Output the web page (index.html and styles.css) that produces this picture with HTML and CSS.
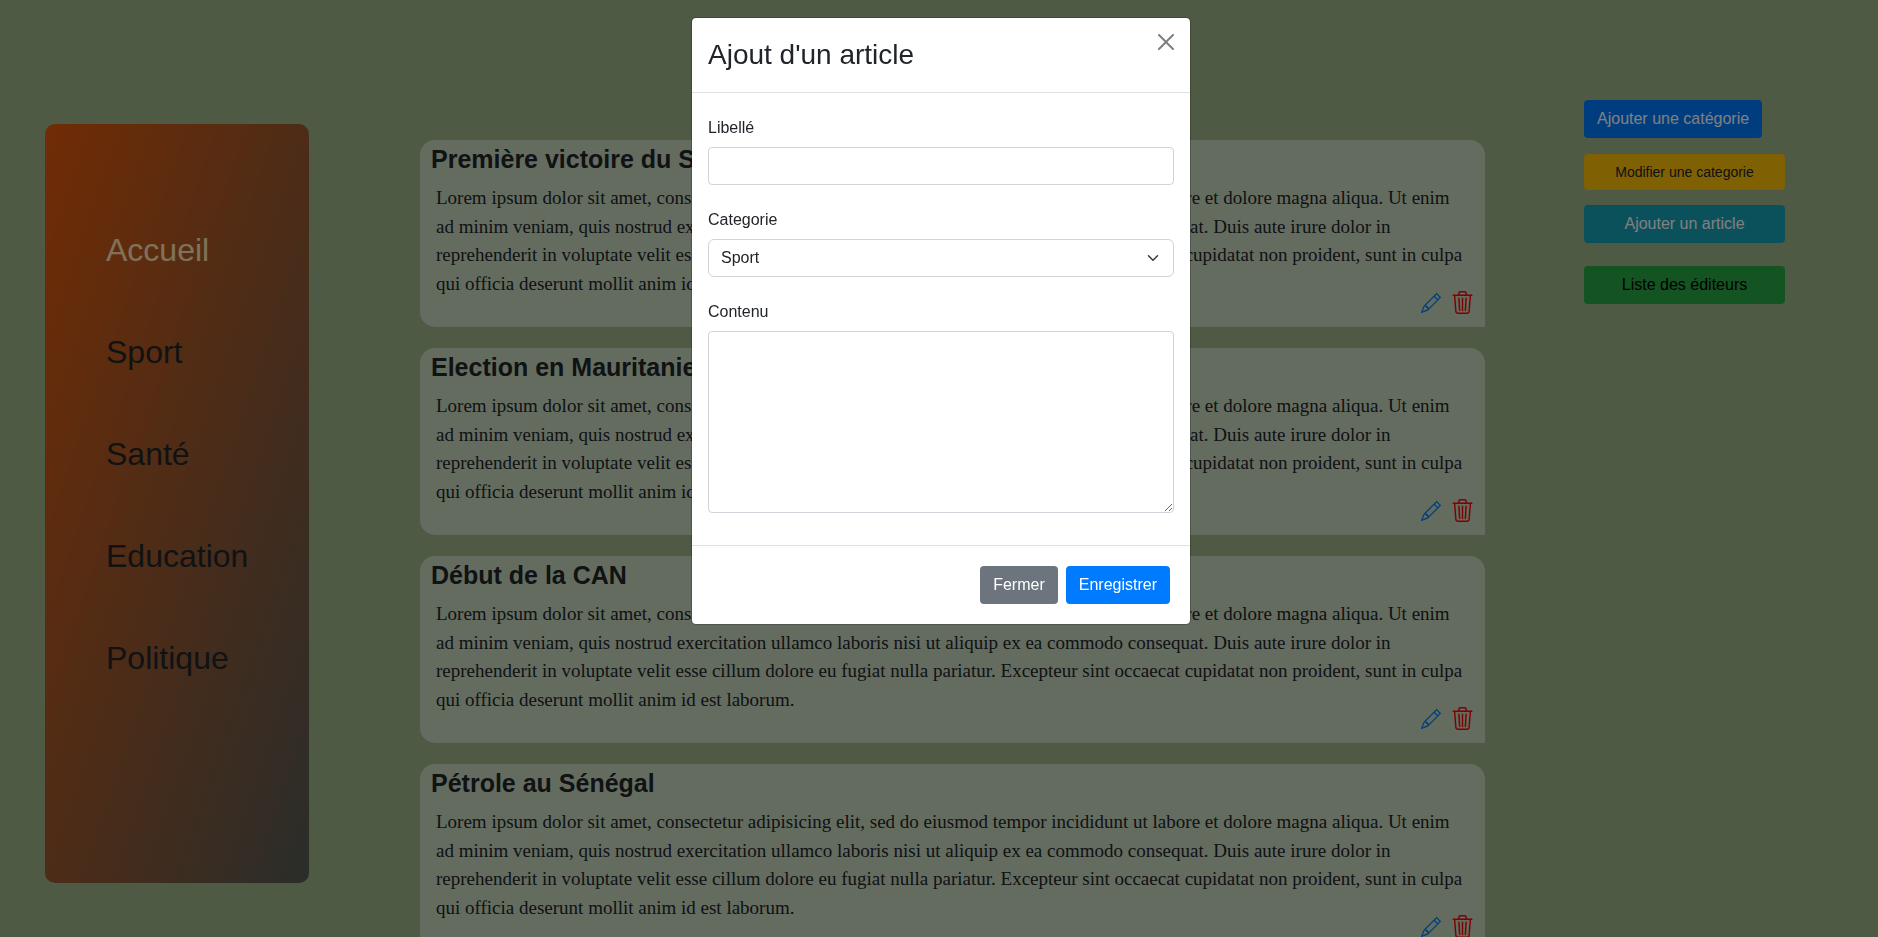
FILE: index.html
```html
<!DOCTYPE html>
<html lang="fr">
<head>
<meta charset="utf-8">
<title>Actualités</title>
<link rel="stylesheet" href="styles.css">
</head>
<body>
<svg class="sprite" aria-hidden="true">
  <symbol id="pencil" viewBox="0 0 16 16">
    <path d="M12.146.146a.5.5 0 0 1 .708 0l3 3a.5.5 0 0 1 0 .708l-10 10a.5.5 0 0 1-.168.11l-5 2a.5.5 0 0 1-.65-.65l2-5a.5.5 0 0 1 .11-.168l10-10zM11.207 2.5 13.5 4.793 14.793 3.5 12.5 1.207 11.207 2.5zm1.586 3L10.5 3.207 4 9.707V10h.5a.5.5 0 0 1 .5.5v.5h.5a.5.5 0 0 1 .5.5v.5h.293l6.5-6.5zm-9.761 5.175-.106.106-1.528 3.821 3.821-1.528.106-.106A.5.5 0 0 1 5 12.5V12h-.5a.5.5 0 0 1-.5-.5V11h-.5a.5.5 0 0 1-.468-.325z"/>
  </symbol>
  <symbol id="trash" viewBox="0 0 16 16">
    <path d="M6.5 1h3a.5.5 0 0 1 .5.5v1H6v-1a.5.5 0 0 1 .5-.5ZM11 2.5v-1A1.5 1.5 0 0 0 9.5 0h-3A1.5 1.5 0 0 0 5 1.5v1H2.506a.58.58 0 0 0-.01 0H1.5a.5.5 0 0 0 0 1h.538l.853 10.66A2 2 0 0 0 4.885 16h6.23a2 2 0 0 0 1.994-1.84l.853-10.66h.538a.5.5 0 0 0 0-1h-.995a.59.59 0 0 0-.01 0H11Zm1.958 1-.846 10.58a1 1 0 0 1-.997.92h-6.23a1 1 0 0 1-.997-.92L3.042 3.5h9.916Zm-7.487 1a.5.5 0 0 1 .528.47l.5 8.5a.5.5 0 0 1-.998.06L5 5.03a.5.5 0 0 1 .47-.53Zm5.058 0a.5.5 0 0 1 .47.53l-.5 8.5a.5.5 0 1 1-.998-.06l.5-8.5a.5.5 0 0 1 .528-.47ZM8 4.5a.5.5 0 0 1 .5.5v8.5a.5.5 0 0 1-1 0V5a.5.5 0 0 1 .5-.5Z"/>
  </symbol>
</svg>

<div class="page">
  <nav class="sidebar">
    <a class="menu-link active" href="#accueil">Accueil</a>
    <a class="menu-link" href="#sport">Sport</a>
    <a class="menu-link" href="#sante">Santé</a>
    <a class="menu-link" href="#education">Education</a>
    <a class="menu-link" href="#politique">Politique</a>
  </nav>

  <main class="articles">
    <article class="card">
      <h2 class="card-title">Première victoire du Sénégal</h2>
      <p class="card-text">Lorem ipsum dolor sit amet, consectetur adipisicing elit, sed do eiusmod tempor incididunt ut labore et dolore magna aliqua. Ut enim ad minim veniam, quis nostrud exercitation ullamco laboris nisi ut aliquip ex ea commodo consequat. Duis aute irure dolor in reprehenderit in voluptate velit esse cillum dolore eu fugiat nulla pariatur. Excepteur sint occaecat cupidatat non proident, sunt in culpa qui officia deserunt mollit anim id est laborum.</p>
      <div class="card-actions">
        <a class="edit" href="#modifier" aria-label="Modifier"><svg><use href="#pencil"/></svg></a>
        <a class="delete" href="#supprimer" aria-label="Supprimer"><svg><use href="#trash"/></svg></a>
      </div>
    </article>
    <article class="card">
      <h2 class="card-title">Election en Mauritanie</h2>
      <p class="card-text">Lorem ipsum dolor sit amet, consectetur adipisicing elit, sed do eiusmod tempor incididunt ut labore et dolore magna aliqua. Ut enim ad minim veniam, quis nostrud exercitation ullamco laboris nisi ut aliquip ex ea commodo consequat. Duis aute irure dolor in reprehenderit in voluptate velit esse cillum dolore eu fugiat nulla pariatur. Excepteur sint occaecat cupidatat non proident, sunt in culpa qui officia deserunt mollit anim id est laborum.</p>
      <div class="card-actions">
        <a class="edit" href="#modifier" aria-label="Modifier"><svg><use href="#pencil"/></svg></a>
        <a class="delete" href="#supprimer" aria-label="Supprimer"><svg><use href="#trash"/></svg></a>
      </div>
    </article>
    <article class="card">
      <h2 class="card-title">Début de la CAN</h2>
      <p class="card-text">Lorem ipsum dolor sit amet, consectetur adipisicing elit, sed do eiusmod tempor incididunt ut labore et dolore magna aliqua. Ut enim ad minim veniam, quis nostrud exercitation ullamco laboris nisi ut aliquip ex ea commodo consequat. Duis aute irure dolor in reprehenderit in voluptate velit esse cillum dolore eu fugiat nulla pariatur. Excepteur sint occaecat cupidatat non proident, sunt in culpa qui officia deserunt mollit anim id est laborum.</p>
      <div class="card-actions">
        <a class="edit" href="#modifier" aria-label="Modifier"><svg><use href="#pencil"/></svg></a>
        <a class="delete" href="#supprimer" aria-label="Supprimer"><svg><use href="#trash"/></svg></a>
      </div>
    </article>
    <article class="card">
      <h2 class="card-title">Pétrole au Sénégal</h2>
      <p class="card-text">Lorem ipsum dolor sit amet, consectetur adipisicing elit, sed do eiusmod tempor incididunt ut labore et dolore magna aliqua. Ut enim ad minim veniam, quis nostrud exercitation ullamco laboris nisi ut aliquip ex ea commodo consequat. Duis aute irure dolor in reprehenderit in voluptate velit esse cillum dolore eu fugiat nulla pariatur. Excepteur sint occaecat cupidatat non proident, sunt in culpa qui officia deserunt mollit anim id est laborum.</p>
      <div class="card-actions">
        <a class="edit" href="#modifier" aria-label="Modifier"><svg><use href="#pencil"/></svg></a>
        <a class="delete" href="#supprimer" aria-label="Supprimer"><svg><use href="#trash"/></svg></a>
      </div>
    </article>
  </main>

  <aside class="admin">
    <button class="btn btn-primary btn-fit" type="button">Ajouter une catégorie</button>
    <button class="btn btn-warning" type="button">Modifier une categorie</button>
    <button class="btn btn-info" type="button">Ajouter un article</button>
    <button class="btn btn-success" type="button">Liste des éditeurs</button>
  </aside>
</div>

<div class="backdrop">
  <form class="modal" role="dialog" aria-labelledby="modal-title">
    <header class="modal-header">
      <h3 class="modal-title" id="modal-title">Ajout d'un article</h3>
      <button class="close" type="button" aria-label="Close">
        <svg viewBox="0 0 16 16"><path d="M.293.293a1 1 0 0 1 1.414 0L8 6.586 14.293.293a1 1 0 1 1 1.414 1.414L9.414 8l6.293 6.293a1 1 0 0 1-1.414 1.414L8 9.414l-6.293 6.293a1 1 0 0 1-1.414-1.414L6.586 8 .293 1.707a1 1 0 0 1 0-1.414z"/></svg>
      </button>
    </header>
    <div class="modal-body">
      <div class="field">
        <label for="libelle">Libellé</label>
        <input class="control" id="libelle" type="text">
      </div>
      <div class="field">
        <label for="categorie">Categorie</label>
        <div class="select-wrap">
          <select class="control select" id="categorie">
            <option>Sport</option>
            <option>Santé</option>
            <option>Education</option>
            <option>Politique</option>
          </select>
          <svg class="chevron" viewBox="0 0 16 16" aria-hidden="true"><path d="m2 5 6 6 6-6"/></svg>
        </div>
      </div>
      <div class="field">
        <label for="contenu">Contenu</label>
        <textarea class="control area" id="contenu" rows="7"></textarea>
      </div>
    </div>
    <footer class="modal-footer">
      <button class="btn btn-secondary" type="button">Fermer</button>
      <button class="btn btn-primary" type="submit">Enregistrer</button>
    </footer>
  </form>
</div>
</body>
</html>
```
FILE: styles.css
```css
*,
*::before,
*::after {
  box-sizing: border-box;
}

body {
  margin: 0;
  height: 100vh;
  overflow: hidden;
  background: #9cb488;
  color: #212529;
  font-family: "Liberation Sans", Arial, sans-serif;
  font-size: 16px;
  line-height: 1.5;
}

h2,
h3,
p {
  margin: 0;
}

.sprite {
  display: none;
}

.page {
  display: grid;
  grid-template-columns: 264px minmax(0, 1fr) 201px;
  align-items: start;
  padding: 100px 93px 0 45px;
}

/* Sidebar */
.sidebar {
  display: flex;
  flex-direction: column;
  gap: 54px;
  height: 81vh;
  margin-top: 24px;
  padding: 102px 61px 0;
  border-radius: 10px;
  background: linear-gradient(to bottom right, #e2580a, #545a54);
}

.menu-link {
  color: inherit;
  font-size: 32px;
  line-height: 48px;
  text-decoration: none;
}

.menu-link.active {
  color: #ffe4b5;
}

/* Articles */
.articles {
  display: flex;
  flex-direction: column;
  gap: 21px;
  margin: 40px 99px 0 111px;
}

.card {
  padding: 4px 11px 13px;
  border-radius: 15px 15px 0 15px;
  background: #c8d8c0;
}

.card-title {
  font-size: 25px;
  line-height: 30px;
}

.card-text {
  margin-top: 10px;
  padding: 0 5px;
  font-family: "Liberation Serif", "Times New Roman", serif;
  font-size: 19px;
}

.card-actions {
  display: flex;
  align-items: center;
  justify-content: flex-end;
  gap: 10px;
  margin-top: -7px;
}

.card-actions a,
.card-actions svg {
  display: block;
}

.card-actions svg {
  fill: currentColor;
}

.edit {
  color: #007bff;
}

.edit svg {
  width: 20px;
  height: 20px;
}

.delete {
  color: #ff0000;
}

.delete svg {
  width: 23px;
  height: 23px;
}

/* Buttons */
.btn {
  padding: 6px 12px;
  border: 1px solid transparent;
  border-radius: 4px;
  color: #fff;
  font: inherit;
  text-align: center;
  cursor: pointer;
}

.btn-primary {
  background: #007bff;
}

.btn-secondary {
  background: #6c757d;
}

.btn-warning {
  margin-bottom: -1px;
  background: #ffc107;
  color: #212529;
  font-size: 14px;
  line-height: 22px;
}

.btn-info {
  background: #17a2b8;
}

.btn-success {
  margin-top: 7px;
  background: #28a745;
  color: #000;
}

.admin {
  display: flex;
  flex-direction: column;
  gap: 16px;
}

.btn-fit {
  align-self: flex-start;
}

/* Modal */
.backdrop {
  position: fixed;
  inset: 0;
  display: flex;
  align-items: flex-start;
  justify-content: center;
  padding: 17px 0 0 4px;
  background: rgba(0, 0, 0, 0.5);
}

.modal {
  width: 500px;
  border: 1px solid rgba(0, 0, 0, 0.2);
  border-radius: 5px;
  background: #fff;
  background-clip: padding-box;
}

.modal-header {
  display: flex;
  align-items: flex-start;
  justify-content: space-between;
  padding: 16px;
  border-bottom: 1px solid #dee2e6;
}

.modal-title {
  padding: 4px 0;
  font-size: 28px;
  font-weight: 400;
  line-height: 34px;
}

.close {
  padding: 0;
  border: 0;
  background: none;
  opacity: 0.5;
  cursor: pointer;
}

.close svg {
  display: block;
  width: 16px;
  height: 16px;
}

.modal-body {
  display: flex;
  flex-direction: column;
  gap: 23px;
  padding: 23px 16px 32px;
}

.field {
  display: flex;
  flex-direction: column;
  gap: 7px;
}

.control {
  display: block;
  width: 100%;
  height: 38px;
  padding: 6px 12px;
  border: 1px solid #ced4da;
  border-radius: 4px;
  background: #fff;
  color: inherit;
  font: inherit;
}

.select-wrap {
  position: relative;
}

.select {
  appearance: none;
  border-radius: 6px;
}

.chevron {
  position: absolute;
  top: 13px;
  right: 15px;
  width: 12px;
  height: 12px;
  fill: none;
  stroke: #343a40;
  stroke-width: 2;
  stroke-linecap: round;
  stroke-linejoin: round;
  pointer-events: none;
}

.area {
  height: auto;
  resize: vertical;
}

.modal-footer {
  display: flex;
  justify-content: flex-end;
  gap: 8px;
  padding: 20px;
  border-top: 1px solid #dee2e6;
}
```
